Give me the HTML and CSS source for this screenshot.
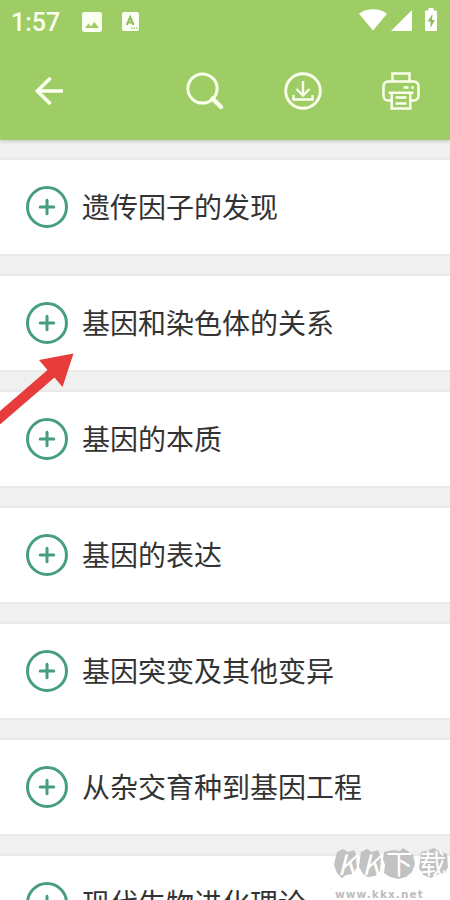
FILE: index.html
```html
<!DOCTYPE html>
<html lang="zh-CN">
<head>
<meta charset="utf-8">
<title>生物</title>
<link rel="stylesheet" href="styles.css">
</head>
<body>
<svg class="defs" width="0" height="0">
  <symbol id="plus" viewBox="0 0 42 42">
    <circle cx="21" cy="21" r="19.500" fill="none" stroke="#479d80" stroke-width="3"/>
    <path d="M21 14.200v13.600M14.200 21h13.600" fill="none" stroke="#479d80" stroke-width="3" stroke-linecap="round"/>
  </symbol>
</svg>
<div class="screen">
  <header class="header">
    <div class="status">
      <span class="clock">1:57</span>
      <svg class="s-image" width="20" height="20" viewBox="0 0 20 20"><path fill="#fbfff2" fill-rule="evenodd" d="M2.500 0h15A2.500 2.500 0 0 1 20 2.500v15a2.500 2.500 0 0 1-2.500 2.500h-15A2.500 2.500 0 0 1 0 17.500v-15A2.500 2.500 0 0 1 2.500 0zM3 16h14l-4.600-6-3.500 4.400-2.500-2.800z"/></svg>
      <svg class="s-doc" width="17" height="19" viewBox="0 0 17 19"><path fill="#fbfff2" d="M2 0h13a2 2 0 0 1 2 2v15a2 2 0 0 1-2 2H2a2 2 0 0 1-2-2V2a2 2 0 0 1 2-2z"/><path d="M4.800 13L8.200 5l3.400 8M6 10.600h4.500" fill="none" stroke="#91bd60" stroke-width="2"/><path d="M9.500 16.200h6" stroke="#9fcd64" stroke-width="1.500" stroke-dasharray="1.300 1"/></svg>
      <span class="spacer"></span>
      <svg class="s-wifi" width="28" height="22" viewBox="0 0 28 22"><path fill="#fff" d="M0 4.700C8-1.200 20-1.200 28 4.700L14 21.500z"/></svg>
      <svg class="s-signal" width="21" height="21" viewBox="0 0 21 21"><path fill="#fff" d="M21 0v21H0z"/></svg>
      <svg class="s-battery" width="12" height="23" viewBox="0 0 12 23"><path fill="#fff" d="M3.500 0h5v2.500H11a1 1 0 0 1 1 1V22a1 1 0 0 1-1 1H1a1 1 0 0 1-1-1V3.500a1 1 0 0 1 1-1h2.500z"/><path fill="#8dbd54" d="M7.500 6L2.500 13.500h3V20l4.300-8H7z"/></svg>
    </div>
    <nav class="toolbar">
      <svg class="t-back" width="30" height="30" viewBox="0 0 30 30" fill="none" stroke="#fbffee" stroke-width="3.600"><path d="M29 15H3M16.500 2L3.400 15l13.100 13"/></svg>
      <svg class="t-search" width="40" height="40" viewBox="0 0 40 40" fill="none" stroke="#fbffee"><circle cx="17.500" cy="17.500" r="14.600" stroke-width="3"/><path d="M27.500 27.500l8.500 8.500" stroke-width="4.400" stroke-linecap="round"/></svg>
      <svg class="t-down" width="38" height="38" viewBox="0 0 38 38" fill="none" stroke="#fbffee" stroke-width="2.400"><circle cx="19" cy="19" r="17.300" stroke-width="2.900"/><path d="M19 9v14.500M12.500 17l6.500 6.500 6.500-6.500M9.500 23v4.500h19V23"/></svg>
      <svg class="t-print" width="38" height="38" viewBox="0 0 38 38" fill="none" stroke="#fbffee" stroke-width="2.500"><path d="M10.500 9.500V1.500h17v8M9 28.500H6A4.500 4.500 0 0 1 1.500 24V14A4.500 4.500 0 0 1 6 9.500h26a4.500 4.500 0 0 1 4.500 4.500v10a4.500 4.500 0 0 1-4.500 4.500h-3M6.500 20.800h25M9.700 21v15.500h18.600V21M13.500 25.500h11M13.500 31.500h11M21.500 15.500h5M29.300 15.500h2.400"/></svg>
    </nav>
  </header>
  <main class="list">
    <div class="card"><svg class="plus"><use href="#plus"/></svg><span class="title">遗传因子的发现</span></div>
    <div class="card"><svg class="plus"><use href="#plus"/></svg><span class="title">基因和染色体的关系</span></div>
    <div class="card"><svg class="plus"><use href="#plus"/></svg><span class="title">基因的本质</span></div>
    <div class="card"><svg class="plus"><use href="#plus"/></svg><span class="title">基因的表达</span></div>
    <div class="card"><svg class="plus"><use href="#plus"/></svg><span class="title">基因突变及其他变异</span></div>
    <div class="card"><svg class="plus"><use href="#plus"/></svg><span class="title">从杂交育种到基因工程</span></div>
    <div class="card"><svg class="plus"><use href="#plus"/></svg><span class="title">现代生物进化理论</span></div>
  </main>
  <svg class="arrow" width="80" height="80" viewBox="0 0 80 80"><path fill="#e63c3c" d="M0 60L47.500 19 39 9l34.500-6.500L62.500 36l-8-9.500L0 73.500z"/></svg>
  <div class="watermark">
    <svg class="blobs" width="116" height="32" viewBox="0 0 116 32"><path fill="#c2c2c2" d="M3 4l6-3 5 3 6-2 3 6-1 4 1 7-4 7-7 1-4 3-5-5-3-8 1-5zM27 4l6-3 5 3 6-2 3 7-1 14-5 5-7 1-5-3-4-7 1-8zM50 4l9-2 7 1 3-3 6 4 4 2 2 10-3 8-6 5-8 2-8-2-6-4 1-8-2-6zM87 4l8-2 5-2 7 4 6 2 1 13-3 6-9 2-5 3-8-3-4-7 1-7z"/></svg>
    <div class="brand"><span class="latin">K</span><span class="latin">K</span><span>下</span><span>载</span></div>
    <div class="site">www.kkx.net</div>
  </div>
</div>
</body>
</html>
```
FILE: styles.css
```css
body {
  margin: 0;
}

.defs {
  position: absolute;
}

.screen {
  position: relative;
  width: 450px;
  height: 900px;
  overflow: hidden;
  background: #f0f0f0;
  font-family: "Noto Sans CJK SC", sans-serif;
}

.screen svg {
  display: block;
  flex: none;
}

.header {
  height: 140px;
  background: #9dcd64;
  box-shadow: 0 1px 4px rgba(0, 0, 0, 0.2);
}

.status {
  display: flex;
  align-items: flex-start;
  height: 42px;
  padding: 0 13px 0 11px;
  box-sizing: border-box;
}

.clock {
  width: 71px;
  margin-top: 8px;
  font: 500 25px/30px Roboto, sans-serif;
  color: #fbfff2;
}

.s-image {
  margin-top: 12px;
}

.s-doc {
  margin: 12px 0 0 20px;
}

.spacer {
  flex: 1;
}

.s-wifi {
  margin-top: 9px;
}

.s-signal {
  margin: 10px 0 0 4px;
}

.s-battery {
  margin: 8px 0 0 13px;
}

.toolbar {
  display: flex;
  align-items: center;
  height: 98px;
  padding-left: 34px;
}

.t-search {
  margin-left: 121px;
}

.t-down {
  margin-left: 59px;
}

.t-print {
  margin-left: 60px;
}

.list {
  display: flex;
  flex-direction: column;
  gap: 18px;
  padding-top: 18px;
}

.card {
  display: flex;
  align-items: center;
  flex: none;
  gap: 14px;
  height: 94px;
  padding-left: 26px;
  border-top: 2px solid #e9e9e9;
  border-bottom: 2px solid #e9e9e9;
  background: #fff;
  color: #333;
  font-size: 28px;
  line-height: 40px;
}

.title {
  padding-bottom: 2px;
}

.plus {
  width: 42px;
  height: 42px;
}

.arrow {
  position: absolute;
  left: 0;
  top: 351px;
}

.watermark {
  position: absolute;
  left: 334px;
  top: 848px;
  width: 116px;
}

.blobs {
  position: absolute;
  left: 0;
  top: 0;
}

.brand {
  position: relative;
  display: grid;
  grid-template-columns: 25px 24px 33px 33px;
  height: 32px;
  justify-items: center;
  color: #fff;
  font-size: 27px;
  line-height: 30px;
}

.latin {
  font-size: 28px;
  font-style: italic;
}

.site {
  margin: 7px 0 0 1px;
  color: #bdbdbd;
  font: bold 10.5px/14px "DejaVu Sans", sans-serif;
  letter-spacing: 1.1px;
}
```
